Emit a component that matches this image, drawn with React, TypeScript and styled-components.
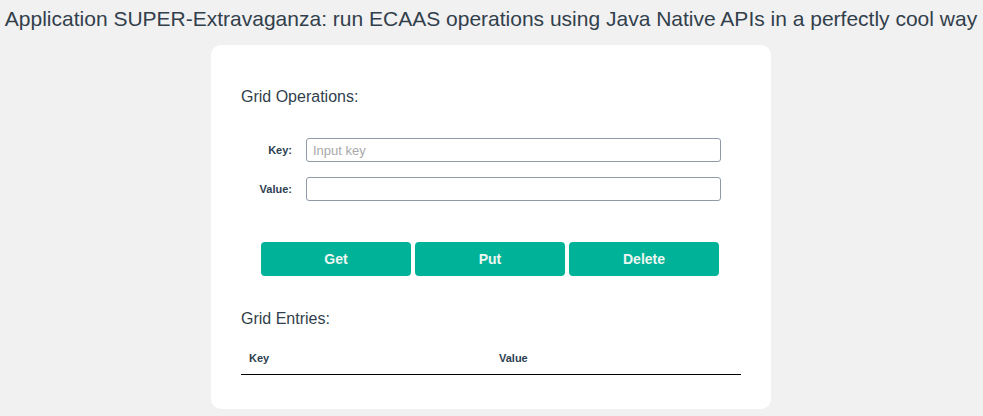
import React from "react";
import styled, { createGlobalStyle } from "styled-components";

const GlobalStyle = createGlobalStyle`
  body {
    margin: 0;
    background-color: #f1f1f1;
    font-family: "Liberation Sans", Arial, sans-serif;
    color: #2c3e50;
  }
`;

const Page = styled.div`
  padding: 7px 1px 0 0;
`;

const Title = styled.h1`
  margin: 0;
  font-size: 21px;
  line-height: 24px;
  font-weight: 400;
  text-align: center;
  color: #323f4c;
`;

const Card = styled.div`
  box-sizing: border-box;
  width: 560px;
  height: 364px;
  margin: 14px auto 0;
  padding: 43px 30px 0;
  background-color: #ffffff;
  border-radius: 10px;
`;

const SectionTitle = styled.h3<{ $top?: number }>`
  margin: ${(p) => p.$top ?? 0}px 0 0;
  font-size: 16px;
  line-height: 18px;
  font-weight: 400;
  color: #323f4c;
`;

const Form = styled.div`
  display: flex;
  flex-direction: column;
  gap: 15px;
  margin-top: 32px;
`;

const Row = styled.div`
  display: grid;
  grid-template-columns: 51px 415px;
  column-gap: 14px;
  align-items: center;
`;

const Label = styled.label`
  text-align: right;
  font-size: 11px;
  font-weight: 700;
  color: #2c3e50;
`;

const Input = styled.input`
  box-sizing: border-box;
  height: 24px;
  padding: 0 6px;
  border: 1px solid #8e9aa6;
  border-radius: 3px;
  font-family: "Liberation Sans", Arial, sans-serif;
  font-size: 13px;
  color: #2c3e50;
  outline: none;

  &::placeholder {
    color: #a9a9a9;
  }
`;

const Actions = styled.div`
  display: flex;
  gap: 4px;
  margin-top: 41px;
  padding-left: 20px;
`;

const Button = styled.button`
  width: 150px;
  height: 34px;
  border: none;
  border-radius: 4px;
  background-color: #00b398;
  color: #eef6f2;
  font-family: "Liberation Sans", Arial, sans-serif;
  font-size: 14px;
  font-weight: 700;
  cursor: pointer;
`;

const Table = styled.table`
  width: 500px;
  margin-top: 18px;
  border-collapse: collapse;
`;

const Th = styled.th`
  width: 50%;
  padding: 6px 8px 9px;
  text-align: left;
  font-size: 11px;
  line-height: 13px;
  font-weight: 700;
  color: #2c3e50;
  border-bottom: 1px solid #000;
`;

const App: React.FC = () => {
  return (
    <Page>
      <GlobalStyle />
      <Title>
        Application SUPER-Extravaganza: run ECAAS operations using Java Native APIs in a perfectly cool way
      </Title>
      <Card>
        <SectionTitle>Grid Operations:</SectionTitle>
        <Form>
          <Row>
            <Label>Key:</Label>
            <Input placeholder="Input key" />
          </Row>
          <Row>
            <Label>Value:</Label>
            <Input />
          </Row>
        </Form>
        <Actions>
          <Button>Get</Button>
          <Button>Put</Button>
          <Button>Delete</Button>
        </Actions>
        <SectionTitle $top={34}>Grid Entries:</SectionTitle>
        <Table>
          <thead>
            <tr>
              <Th>Key</Th>
              <Th>Value</Th>
            </tr>
          </thead>
          <tbody />
        </Table>
      </Card>
    </Page>
  );
};

export default App;
